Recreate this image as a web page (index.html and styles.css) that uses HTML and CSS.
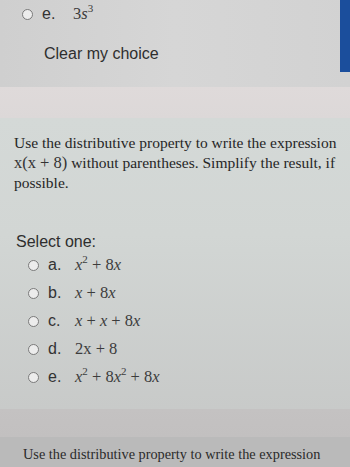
FILE: index.html
```html
<!DOCTYPE html>
<html>
<head>
<meta charset="utf-8">
<link rel="stylesheet" href="styles.css">
</head>
<body>
<div class="top">
  <div class="top-content">
    <div class="opt top-opt">
      <span class="radio"></span>
      <span class="letter">e.</span>
      <span class="expr">3<i>s</i><sup>3</sup></span>
    </div>
    <div class="clear">Clear my choice</div>
  </div>
  <div class="bluebar"></div>
</div>
<div class="band"></div>
<div class="formulation">
  <p class="qtext">Use the distributive property to write the expression<br><span class="math">x(x + 8)</span> without parentheses. Simplify the result, if<br>possible.</p>
  <div class="select">Select one:</div>
  <div class="opt">
    <span class="radio"></span><span class="letter">a.</span>
    <span class="expr"><i>x</i><sup>2</sup> + 8<i>x</i></span>
  </div>
  <div class="opt">
    <span class="radio"></span><span class="letter">b.</span>
    <span class="expr"><i>x</i> + 8<i>x</i></span>
  </div>
  <div class="opt">
    <span class="radio"></span><span class="letter">c.</span>
    <span class="expr"><i>x</i> + <i>x</i> + 8<i>x</i></span>
  </div>
  <div class="opt">
    <span class="radio"></span><span class="letter">d.</span>
    <span class="expr">2x + 8</span>
  </div>
  <div class="opt">
    <span class="radio"></span><span class="letter">e.</span>
    <span class="expr"><i>x</i><sup>2</sup> + 8<i>x</i><sup>2</sup> + 8<i>x</i></span>
  </div>
</div>
<div class="band2"></div>
<div class="formulation2">
  <p class="qtext2">Use the distributive property to write the expression</p>
</div>
</body>
</html>
```
FILE: styles.css
```css
html, body {
  margin: 0;
  padding: 0;
}
body {
  width: 350px;
  height: 467px;
  overflow: hidden;
  background: #c0c0c0;
  font-family: "Liberation Sans", Arial, sans-serif;
  color: #333;
}
.top {
  height: 87px;
  display: flex;
  justify-content: space-between;
  background: linear-gradient(90deg, #cfcfcf 0%, #d6d6d6 50%, #d2d2d2 100%);
}
.top-content {
  padding-left: 22px;
}
.bluebar {
  width: 10px;
  height: 72px;
  background: #1b4e9c;
}
.opt {
  height: 28px;
  display: flex;
  align-items: center;
  font-size: 16px;
}
.top-opt .letter {
  width: 31px;
}
.radio {
  box-sizing: border-box;
  width: 11px;
  height: 11px;
  border: 1.5px solid #7a7a7a;
  border-radius: 50%;
  background: #ececec;
  margin-right: 9px;
  flex: none;
}
.letter {
  width: 27px;
  color: #333;
}
.expr {
  font-family: "Liberation Serif", "Times New Roman", serif;
  font-size: 16.5px;
  color: #3c3c3c;
}
.expr sup {
  font-size: 11px;
  vertical-align: 7px;
  line-height: 0;
}
.clear {
  margin-top: 16px;
  margin-left: 22px;
  font-size: 16px;
  line-height: 20px;
  color: #2e2e2e;
}
.band {
  height: 31px;
  background: linear-gradient(180deg, #dfdada 0%, #dcd8d8 100%);
}
.formulation {
  height: 291px;
  box-sizing: border-box;
  padding: 15px 0 0 14px;
  background: linear-gradient(180deg, #d4d9d7 0%, #d2d6d4 40%, #c8cac9 100%);
}
.qtext {
  margin: 0;
  white-space: nowrap;
  font-family: "Liberation Serif", "Times New Roman", serif;
  font-size: 15.5px;
  line-height: 20px;
  color: #262626;
}
.math {
  font-size: 16.5px;
  color: #333;
}
.select {
  margin-top: 40px;
  margin-left: 2px;
  font-size: 16px;
  line-height: 18px;
  color: #2e2e2e;
}
.formulation .opt {
  padding-left: 14px;
}
.band2 {
  height: 28px;
  background: linear-gradient(180deg, #c4c2c2 0%, #c2c0c0 100%);
}
.formulation2 {
  height: 30px;
  box-sizing: border-box;
  padding: 8px 10px 0 23px;
  background: #bababa;
  overflow: hidden;
}
.qtext2 {
  margin: 0;
  white-space: nowrap;
  font-family: "Liberation Serif", "Times New Roman", serif;
  font-size: 14.3px;
  line-height: 19px;
  color: #2a2a2a;
}
```
